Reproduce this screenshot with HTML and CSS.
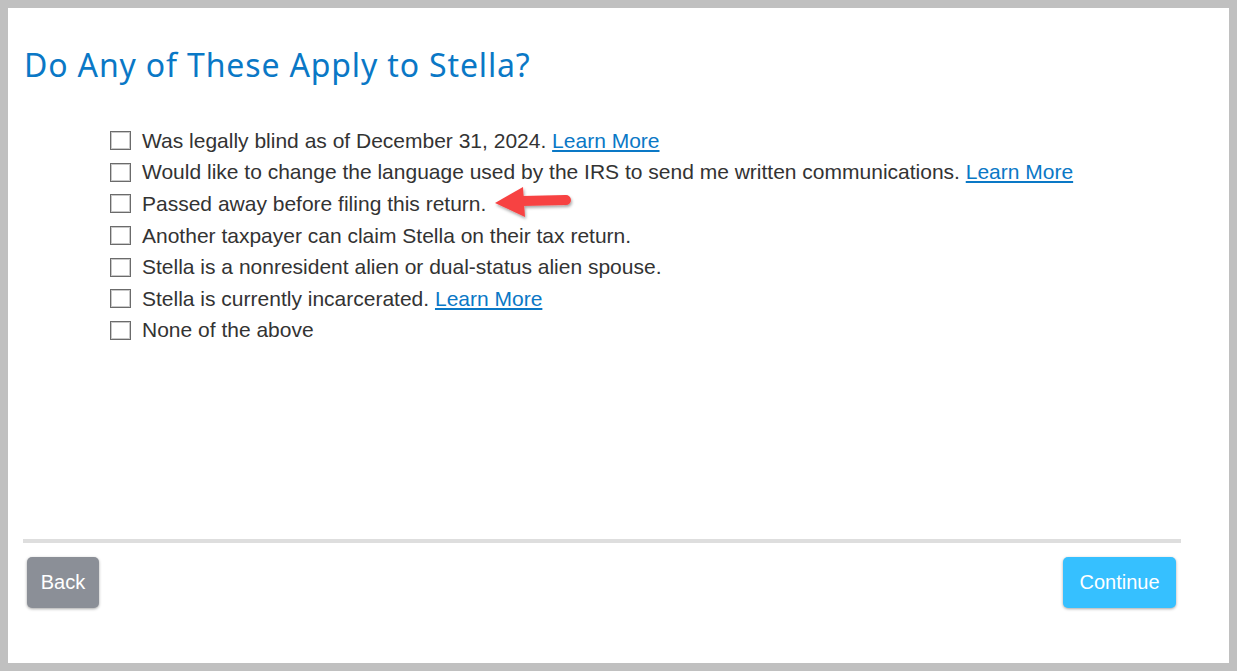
FILE: index.html
```html
<!DOCTYPE html>
<html lang="en">
<head>
  <meta charset="UTF-8">
  <title>Do Any of These Apply to Stella?</title>
  <link rel="stylesheet" href="styles.css">
</head>
<body>
<div class="frame">
  <div class="page">
    <h1 class="page-title">Do Any of These Apply to Stella?</h1>

    <ul class="options">
      <li class="option">
        <label><input type="checkbox"><span class="box"></span>Was legally blind as of December 31, 2024. <a href="#" class="learn">Learn More</a></label>
      </li>
      <li class="option">
        <label><input type="checkbox"><span class="box"></span>Would like to change the language used by the IRS to send me written communications. <a href="#" class="learn">Learn More</a></label>
      </li>
      <li class="option">
        <label><input type="checkbox"><span class="box"></span>Passed away before filing this return.</label>
        <svg class="arrow" width="92" height="40" viewBox="0 0 92 40">
          <defs>
            <filter id="shade" x="-20%" y="-40%" width="140%" height="180%">
              <feDropShadow dx="1" dy="2" stdDeviation="1.5" flood-color="#000" flood-opacity="0.35"/>
            </filter>
          </defs>
          <g filter="url(#shade)">
            <line x1="30" y1="18" x2="74" y2="17" stroke="#f74343" stroke-width="10" stroke-linecap="round"/>
            <polygon points="3,20 31,4 33,34" fill="#f74343"/>
          </g>
        </svg>
      </li>
      <li class="option">
        <label><input type="checkbox"><span class="box"></span>Another taxpayer can claim Stella on their tax return.</label>
      </li>
      <li class="option">
        <label><input type="checkbox"><span class="box"></span>Stella is a nonresident alien or dual-status alien spouse.</label>
      </li>
      <li class="option">
        <label><input type="checkbox"><span class="box"></span>Stella is currently incarcerated. <a href="#" class="learn">Learn More</a></label>
      </li>
      <li class="option">
        <label><input type="checkbox"><span class="box"></span>None of the above</label>
      </li>
    </ul>

    <div class="footer">
      <button class="btn btn-back">Back</button>
      <button class="btn btn-continue">Continue</button>
    </div>
  </div>
</div>
</body>
</html>
```

FILE: styles.css
```css
* {
  margin: 0;
  padding: 0;
  box-sizing: border-box;
}

body {
  background: #c0c0c0;
  font-family: 'Liberation Sans', Arial, sans-serif;
  color: #333;
}

.frame {
  padding: 8px;
  height: 671px;
}

.page {
  background: #fff;
  height: 100%;
  padding: 39px 48px 0 15px;
  display: flex;
  flex-direction: column;
}

.page-title {
  font-family: 'Noto Sans', 'Open Sans', sans-serif;
  font-weight: 400;
  font-size: 32px;
  line-height: 36px;
  color: #0a78c6;
  padding-left: 1px;
  letter-spacing: 0.85px;
}

.options {
  list-style: none;
  margin-top: 42px;
  padding-left: 87px;
}

.option {
  position: relative;
  display: flex;
  align-items: center;
  height: 31.6px;
  font-size: 21px;
  color: #333;
}

.option label {
  display: flex;
  align-items: center;
  cursor: pointer;
  white-space: pre;
}

.option input {
  position: absolute;
  opacity: 0;
  width: 0;
  height: 0;
}

.box {
  width: 21px;
  height: 19px;
  border: 1px solid #6b6b6b;
  box-shadow: inset 0 0 0 1px #c9c9c9;
  background: #fff;
  margin-right: 11px;
  flex-shrink: 0;
}

.learn {
  color: #0a78c6;
  text-decoration: underline;
}

.arrow {
  position: absolute;
  left: 382px;
  top: -5px;
}

.footer {
  margin-top: auto;
  margin-bottom: 55px;
  border-top: 4px solid #dedede;
  padding: 14px 5px 0 4px;
  display: flex;
  justify-content: space-between;
}

.btn {
  height: 51px;
  border: none;
  border-radius: 5px;
  color: #fff;
  font-family: 'Liberation Sans', Arial, sans-serif;
  font-size: 20px;
  cursor: pointer;
  box-shadow: 0 1px 3px rgba(0, 0, 0, 0.35);
}

.btn-back {
  width: 72px;
  background: #8b8f97;
}

.btn-continue {
  width: 113px;
  background: #36c0ff;
}
```
